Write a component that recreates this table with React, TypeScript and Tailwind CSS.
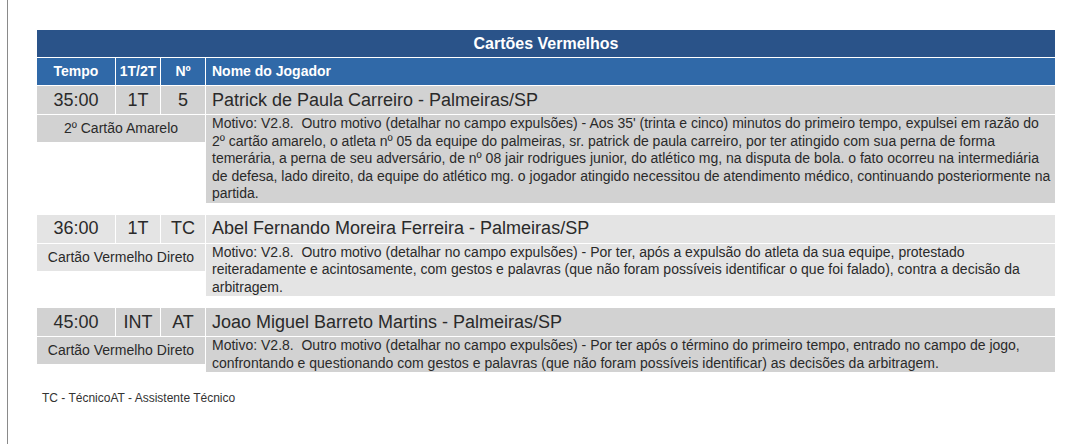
import React from "react";

type Block = {
  tempo: string;
  periodo: string;
  num: string;
  nome: string;
  tipo: string;
  motivo: string;
  light?: boolean;
};

const blocks: Block[] = [
  {
    tempo: "35:00",
    periodo: "1T",
    num: "5",
    nome: "Patrick de Paula Carreiro - Palmeiras/SP",
    tipo: "2º Cartão Amarelo",
    motivo:
      "Motivo: V2.8.\u00a0 Outro motivo (detalhar no campo expulsões) - Aos 35' (trinta e cinco) minutos do primeiro tempo, expulsei em razão do 2º cartão amarelo, o atleta nº 05 da equipe do palmeiras, sr. patrick de paula carreiro, por ter atingido com sua perna de forma temerária, a perna de seu adversário, de nº 08 jair rodrigues junior, do atlético mg, na disputa de bola. o fato ocorreu na intermediária de defesa, lado direito, da equipe do atlético mg. o jogador atingido necessitou de atendimento médico, continuando posteriormente na partida.",
  },
  {
    tempo: "36:00",
    periodo: "1T",
    num: "TC",
    nome: "Abel Fernando Moreira Ferreira - Palmeiras/SP",
    tipo: "Cartão Vermelho Direto",
    motivo:
      "Motivo: V2.8.\u00a0 Outro motivo (detalhar no campo expulsões) - Por ter, após a expulsão do atleta da sua equipe, protestado reiteradamente e acintosamente, com gestos e palavras (que não foram possíveis identificar o que foi falado), contra a decisão da arbitragem.",
    light: true,
  },
  {
    tempo: "45:00",
    periodo: "INT",
    num: "AT",
    nome: "Joao Miguel Barreto Martins - Palmeiras/SP",
    tipo: "Cartão Vermelho Direto",
    motivo:
      "Motivo: V2.8.\u00a0 Outro motivo (detalhar no campo expulsões) - Por ter após o término do primeiro tempo, entrado no campo de jogo, confrontando e questionando com gestos e palavras (que não foram possíveis identificar) as decisões da arbitragem.",
  },
];

function BlockView({ b }: { b: Block }) {
  const bg = b.light ? "bg-[#e4e4e4]" : "bg-[#d2d2d2]";
  return (
    <div className="flex flex-col gap-px mb-[12px]">
      <div className="grid grid-cols-[78px_44px_44px_1fr] gap-px h-[28px] text-[18px] text-[#2a2a2a]">
        <div className={`${bg} flex items-center justify-center`}>{b.tempo}</div>
        <div className={`${bg} flex items-center justify-center`}>{b.periodo}</div>
        <div className={`${bg} flex items-center justify-center`}>{b.num}</div>
        <div className={`${bg} flex items-center pl-[6px]`}>{b.nome}</div>
      </div>
      <div className="grid grid-cols-[168px_1fr] gap-px items-start text-[14px] text-[#2a2a2a]">
        <div className={`${bg} h-[27px] flex items-center justify-center`}>{b.tipo}</div>
        <div className={`${bg} pl-[6px] pr-0 leading-[17.5px]`}>{b.motivo}</div>
      </div>
    </div>
  );
}

export default function App() {
  return (
    <div
      className="w-[1082px] h-[444px] bg-white overflow-hidden"
      style={{ fontFamily: '"Liberation Sans", Arial, sans-serif' }}
    >
      <div className="ml-[7px] h-full border-l border-[#8a8a8a] pl-[29px] pt-[30px]">
        <div className="w-[1018px]">
          <div className="flex flex-col gap-px mb-px">
            <div className="h-[27px] bg-[#2a5389] text-white font-bold text-[16px] flex items-center justify-center">
              Cartões Vermelhos
            </div>
            <div className="grid grid-cols-[78px_44px_44px_1fr] gap-px h-[27px] text-white font-bold text-[14px]">
              <div className="bg-[#3069a8] flex items-center justify-center">Tempo</div>
              <div className="bg-[#3069a8] flex items-center justify-center">1T/2T</div>
              <div className="bg-[#3069a8] flex items-center justify-center">Nº</div>
              <div className="bg-[#3069a8] flex items-center pl-[6px]">Nome do Jogador</div>
            </div>
          </div>
          {blocks.map((b, i) => (
            <BlockView key={i} b={b} />
          ))}
          <div className="mt-[17px] pl-[5px] text-[12px] text-[#333]">TC - TécnicoAT - Assistente Técnico</div>
        </div>
      </div>
    </div>
  );
}
